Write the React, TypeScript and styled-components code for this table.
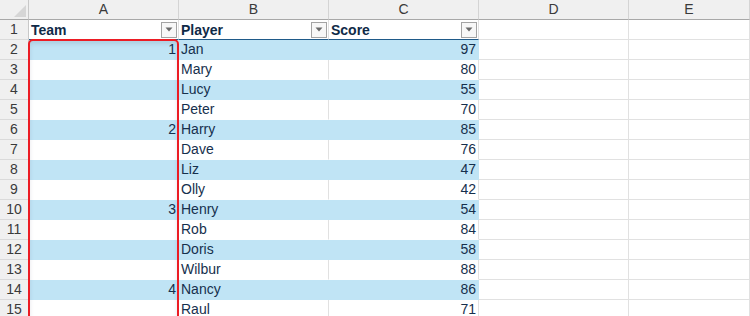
import styled, { createGlobalStyle } from 'styled-components'

const GlobalStyle = createGlobalStyle`
    html, body {
        margin: 0;
        padding: 0;
        background: #ffffff;
        overflow: hidden;
    }
`

const COLS = '29px 150px 150px 150px 150px 1fr'
const BAND = '#c0e4f5'
const GRID = '#e1e1e1'
const INK = '#16304d'

const Sheet = styled.div`
    position: relative;
    width: 750px;
    height: 316px;
    overflow: hidden;
    font-family: "Liberation Sans", Arial, sans-serif;
    font-size: 14px;
    color: ${INK};
`

const Row = styled.div`
    display: grid;
    grid-template-columns: ${COLS};
    height: 20px;
`

const Corner = styled.div`
    box-sizing: border-box;
    background: #f0f0f0;
    border-right: 1px solid #c8c8c8;
    border-bottom: 1px solid #a8a8a8;
    display: flex;
    align-items: flex-end;
    justify-content: flex-end;
    padding: 0 2px 2px 0;
`

const ColLetter = styled.div`
    box-sizing: border-box;
    background: #f0f0f0;
    border-right: 1px solid #d4d4d4;
    border-bottom: 1px solid #a8a8a8;
    color: #3a3a3a;
    text-align: center;
    line-height: 19px;
`

const RowNum = styled.div`
    box-sizing: border-box;
    background: #f0f0f0;
    border-right: 1px solid #c8c8c8;
    border-bottom: 1px solid #dadada;
    color: #3a3a3a;
    text-align: center;
    line-height: 19px;
`

const Cell = styled.div<{ $band?: boolean; $inTable?: boolean; $right?: boolean }>`
    box-sizing: border-box;
    background: ${p => (p.$band ? BAND : '#ffffff')};
    border-right: 1px solid ${p => (p.$band ? BAND : GRID)};
    border-bottom: 1px solid ${p => (p.$band ? BAND : p.$inTable ? '#ffffff' : GRID)};
    text-align: ${p => (p.$right ? 'right' : 'left')};
    padding: 0 2px;
    line-height: 19px;
    white-space: nowrap;
    overflow: hidden;
`

const HeadCell = styled.div`
    box-sizing: border-box;
    background: #ffffff;
    border-right: 1px solid ${GRID};
    border-bottom: 1px solid #1f5a89;
    display: flex;
    align-items: center;
    justify-content: space-between;
    padding: 0 1px 0 2px;
    font-weight: bold;
    color: #0f2a47;
`

const FilterButton = styled.div`
    box-sizing: border-box;
    width: 16px;
    height: 16px;
    background: #f7f7f7;
    border: 1px solid #a3a3a3;
    display: flex;
    align-items: center;
    justify-content: center;
`

const Highlight = styled.div`
    position: absolute;
    left: 28px;
    top: 39px;
    width: 151px;
    height: 320px;
    box-sizing: border-box;
    border: 2px solid #ec1c24;
    border-radius: 5px;
    box-shadow: inset 0 3px 4px rgba(40, 60, 80, 0.12);
    pointer-events: none;
`

const Arrow = () => (
    <svg width="8" height="5" viewBox="0 0 8 5">
        <polygon points="0.5,0.5 7.5,0.5 4,4.5" fill="#6a6a6a" />
    </svg>
)

const CornerMark = () => (
    <svg width="12" height="12" viewBox="0 0 12 12">
        <polygon points="12,0 12,12 0,12" fill="#d6d6d6" />
    </svg>
)

const data: [string, string, number][] = [
    ['1', 'Jan', 97],
    ['', 'Mary', 80],
    ['', 'Lucy', 55],
    ['', 'Peter', 70],
    ['2', 'Harry', 85],
    ['', 'Dave', 76],
    ['', 'Liz', 47],
    ['', 'Olly', 42],
    ['3', 'Henry', 54],
    ['', 'Rob', 84],
    ['', 'Doris', 58],
    ['', 'Wilbur', 88],
    ['4', 'Nancy', 86],
    ['', 'Raul', 71],
]

const App = () => {
    return <>
        <GlobalStyle />
        <Sheet>
            <Row>
                <Corner><CornerMark /></Corner>
                {['A', 'B', 'C', 'D', 'E'].map(l => <ColLetter key={l}>{l}</ColLetter>)}
            </Row>
            <Row>
                <RowNum>1</RowNum>
                {['Team', 'Player', 'Score'].map(h => (
                    <HeadCell key={h}>
                        <span>{h}</span>
                        <FilterButton><Arrow /></FilterButton>
                    </HeadCell>
                ))}
                <Cell />
                <Cell />
            </Row>
            {data.map(([team, player, score], i) => {
                const band = i % 2 === 0
                return (
                    <Row key={player}>
                        <RowNum>{i + 2}</RowNum>
                        <Cell $band={band} $inTable $right>{team}</Cell>
                        <Cell $band={band} $inTable>{player}</Cell>
                        <Cell $band={band} $inTable $right>{score}</Cell>
                        <Cell />
                        <Cell />
                    </Row>
                )
            })}
            <Highlight />
        </Sheet>
    </>
}

export default App
